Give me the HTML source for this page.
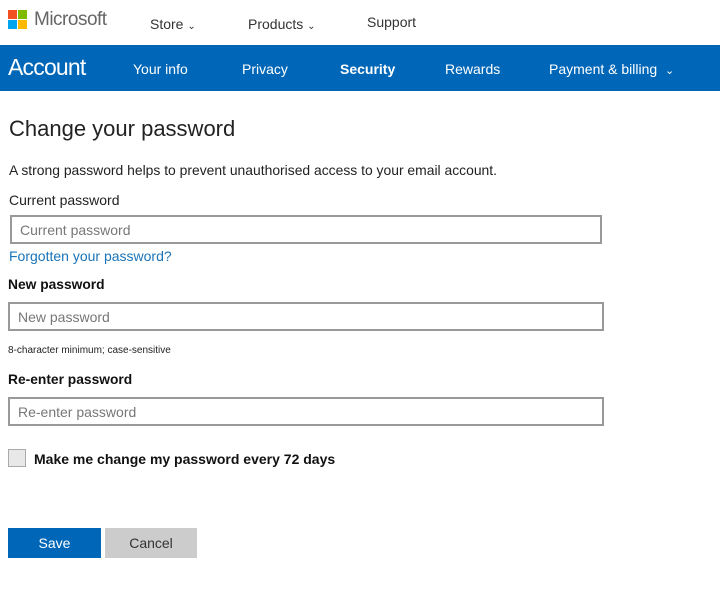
<!DOCTYPE html>
<html><head><style>
*{margin:0;padding:0;box-sizing:border-box}
body{width:720px;height:600px;background:#fff;font-family:"Liberation Sans",sans-serif;color:#222;position:relative;overflow:hidden}
.a{position:absolute;white-space:nowrap}
.box{position:absolute;border:2px solid #999;background:#fff;color:#777;font-size:14px;padding-left:8px;display:flex;align-items:center}
</style></head><body>
<div class="a" style="left:8px;top:10px;width:9px;height:9px;background:#f25022"></div>
<div class="a" style="left:18px;top:10px;width:9px;height:9px;background:#7fba00"></div>
<div class="a" style="left:8px;top:20px;width:9px;height:9px;background:#00a4ef"></div>
<div class="a" style="left:18px;top:20px;width:9px;height:9px;background:#ffb900"></div>
<div class="a" style="left:34px;top:9px;font-size:19px;color:#666;letter-spacing:-0.5px">Microsoft</div>
<div class="a" style="left:150px;top:16px;font-size:14px;color:#333">Store <span style="font-size:10px">&#8964;</span></div>
<div class="a" style="left:248px;top:16px;font-size:14px;color:#333">Products <span style="font-size:10px">&#8964;</span></div>
<div class="a" style="left:367px;top:14px;font-size:14px;color:#333">Support</div>
<div class="a" style="left:0;top:45px;width:720px;height:46px;background:#0067b8"></div>
<div class="a" style="left:8px;top:54px;font-size:23px;color:#fff;letter-spacing:-0.8px">Account</div>
<div class="a" style="left:133px;top:61px;font-size:14px;color:#fff">Your info</div>
<div class="a" style="left:242px;top:61px;font-size:14px;color:#fff">Privacy</div>
<div class="a" style="left:340px;top:61px;font-size:14px;color:#fff;font-weight:bold">Security</div>
<div class="a" style="left:445px;top:61px;font-size:14px;color:#fff">Rewards</div>
<div class="a" style="left:549px;top:61px;font-size:14px;color:#fff">Payment &amp; billing &nbsp;<span style="font-size:11px">&#8964;</span></div>
<div class="a" style="left:9px;top:116px;font-size:22px;color:#222">Change your password</div>
<div class="a" style="left:9px;top:162px;font-size:13.9px;color:#222">A strong password helps to prevent unauthorised access to your email account.</div>
<div class="a" style="left:9px;top:192px;font-size:14px;color:#222">Current password</div>
<div class="box" style="left:10px;top:215px;width:592px;height:29px">Current password</div>
<div class="a" style="left:9px;top:248px;font-size:14px;color:#1a73b8">Forgotten your password?</div>
<div class="a" style="left:8px;top:277px;font-size:13.8px;font-weight:bold;color:#111">New password</div>
<div class="box" style="left:8px;top:302px;width:596px;height:29px">New password</div>
<div class="a" style="left:8px;top:345px;font-size:10px;color:#222">8-character minimum; case-sensitive</div>
<div class="a" style="left:8px;top:372px;font-size:13.8px;font-weight:bold;color:#111">Re-enter password</div>
<div class="box" style="left:8px;top:397px;width:596px;height:29px">Re-enter password</div>
<div class="a" style="left:8px;top:449px;width:18px;height:18px;border:1px solid #aaa;background:#e8e8e8"></div>
<div class="a" style="left:34px;top:451px;font-size:14px;font-weight:bold;color:#111">Make me change my password every 72 days</div>
<div class="a" style="left:8px;top:528px;width:93px;height:30px;background:#0067b8;color:#fff;font-size:14px;display:flex;align-items:center;justify-content:center">Save</div>
<div class="a" style="left:105px;top:528px;width:92px;height:30px;background:#ccc;color:#333;font-size:14px;display:flex;align-items:center;justify-content:center">Cancel</div>
</body></html>
